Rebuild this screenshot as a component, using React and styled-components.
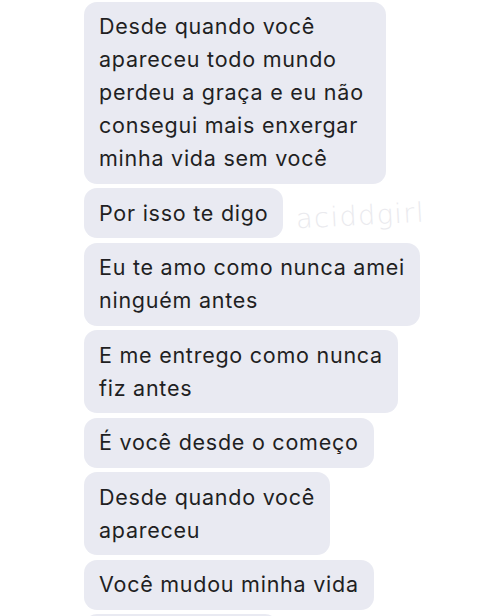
import styled, { createGlobalStyle } from "styled-components";

const MESSAGES = [
  ["Desde quando você", "apareceu todo mundo", "perdeu a graça e eu não", "consegui mais enxergar", "minha vida sem você"],
  ["Por isso te digo"],
  ["Eu te amo como nunca amei", "ninguém antes"],
  ["E me entrego como nunca", "fiz antes"],
  ["É você desde o começo"],
  ["Desde quando você", "apareceu"],
  ["Você mudou minha vida"],
];

const GlobalStyle = createGlobalStyle`
  html, body {
    margin: 0;
    padding: 0;
    background: #ffffff;
  }
`;

export default function App() {
  return (
    <>
      <GlobalStyle />
      <Screen>
        <Thread>
          {MESSAGES.map((lines, i) => (
            <Bubble key={i} $extraRight={i === 0}>
              {lines.map((line, j) => (
                <Line key={j}>{line}</Line>
              ))}
            </Bubble>
          ))}
          {/* next message, scrolled below the fold */}
          <Bubble $peek />
        </Thread>
        <Watermark>aciddgirl</Watermark>
      </Screen>
    </>
  );
}

const Screen = styled.div`
  position: relative;
  width: 500px;
  height: 616px;
  overflow: hidden;
  background: #ffffff;
`;

const Thread = styled.div`
  display: flex;
  flex-direction: column;
  align-items: flex-start;
  gap: 4.5px;
  padding: 1.5px 0 0 84px;
`;

const Bubble = styled.div`
  display: flex;
  flex-direction: column;
  flex-shrink: 0;
  width: ${({ $peek }) => ($peek ? "194px" : "auto")};
  height: ${({ $peek }) => ($peek ? "50px" : "auto")};
  box-sizing: border-box;
  padding: 8.5px ${({ $extraRight }) => ($extraRight ? "22px" : "15px")} 8.5px 15px;
  background: #e9eaf2;
  border-radius: 13px;
  font-family: Inter, "Liberation Sans", sans-serif;
  font-size: 21.5px;
  letter-spacing: 0.75px;
  line-height: 33px;
  color: #1f1f23;
`;

const Line = styled.span`
  white-space: nowrap;
`;

const Watermark = styled.div`
  position: absolute;
  left: 296px;
  top: 200px;
  font-family: "DejaVu Sans", sans-serif;
  font-weight: 200;
  font-size: 27px;
  letter-spacing: 1.5px;
  color: #eaeaee;
  transform: rotate(-3deg);
  pointer-events: none;
`;
